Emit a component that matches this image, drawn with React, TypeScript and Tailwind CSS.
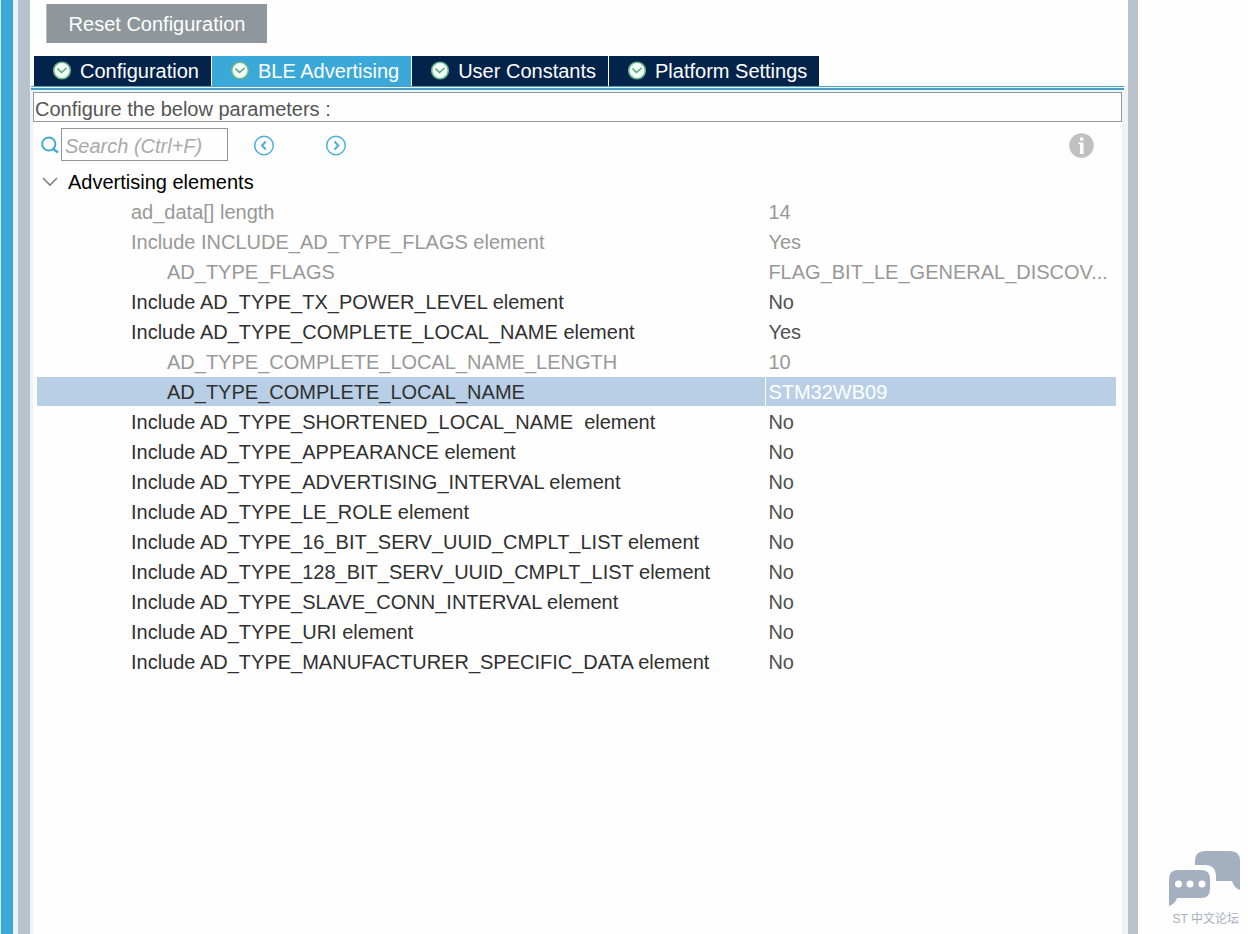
import { useState } from 'react';

const TABS = ['Configuration', 'BLE Advertising', 'User Constants', 'Platform Settings'];

type Row = { name: string; value: string; child?: boolean; disabled?: boolean };

const ROWS: Row[] = [
  { name: 'ad_data[] length', value: '14', disabled: true },
  { name: 'Include INCLUDE_AD_TYPE_FLAGS element', value: 'Yes', disabled: true },
  { name: 'AD_TYPE_FLAGS', value: 'FLAG_BIT_LE_GENERAL_DISCOV...', child: true, disabled: true },
  { name: 'Include AD_TYPE_TX_POWER_LEVEL element', value: 'No' },
  { name: 'Include AD_TYPE_COMPLETE_LOCAL_NAME element', value: 'Yes' },
  { name: 'AD_TYPE_COMPLETE_LOCAL_NAME_LENGTH', value: '10', child: true, disabled: true },
  { name: 'AD_TYPE_COMPLETE_LOCAL_NAME', value: 'STM32WB09', child: true },
  { name: 'Include AD_TYPE_SHORTENED_LOCAL_NAME  element', value: 'No' },
  { name: 'Include AD_TYPE_APPEARANCE element', value: 'No' },
  { name: 'Include AD_TYPE_ADVERTISING_INTERVAL element', value: 'No' },
  { name: 'Include AD_TYPE_LE_ROLE element', value: 'No' },
  { name: 'Include AD_TYPE_16_BIT_SERV_UUID_CMPLT_LIST element', value: 'No' },
  { name: 'Include AD_TYPE_128_BIT_SERV_UUID_CMPLT_LIST element', value: 'No' },
  { name: 'Include AD_TYPE_SLAVE_CONN_INTERVAL element', value: 'No' },
  { name: 'Include AD_TYPE_URI element', value: 'No' },
  { name: 'Include AD_TYPE_MANUFACTURER_SPECIFIC_DATA element', value: 'No' },
];

function CheckIcon() {
  return (
    <svg className="h-5 w-5 shrink-0" viewBox="0 0 20 20" fill="none">
      <circle cx="10" cy="9.5" r="8.3" fill="#f1fff6" stroke="#6db78d" strokeWidth="1.6" />
      <path d="M5.5 7.5l4 4L14.5 7" stroke="#55a377" strokeWidth="1.5" />
    </svg>
  );
}

function SearchIcon() {
  return (
    <svg className="h-[18px] w-[18px] shrink-0" viewBox="0 0 18 18" fill="none" stroke="#45abd3">
      <circle cx="7.8" cy="8" r="6.6" strokeWidth="2" />
      <path d="M11.5 12.5l5.5 4" strokeWidth="2.6" />
    </svg>
  );
}

function ArrowIcon({ d }: { d: string }) {
  return (
    <svg className="h-[22px] w-[22px]" viewBox="0 0 22 22" fill="none" stroke="#4eb0d8">
      <circle cx="11" cy="11.5" r="9.3" strokeWidth="1.5" />
      <path d={d} strokeWidth="2" />
    </svg>
  );
}

function ForumLogo() {
  return (
    <svg className="h-14 w-[71px]" viewBox="0 0 71 56">
      <path d="M36 0H61Q71 0 71 10V39Q65 37 63 30H47V26Q47 14 36 14H26V10Q26 0 36 0Z" fill="#a4b0c0" />
      <path d="M9 19H32Q41 19 41 28V38Q41 47 32 47H8Q6 53 0 55V28Q0 19 9 19Z" fill="#a4b0c0" />
      <circle cx="9.5" cy="33" r="3.5" fill="#fff" />
      <circle cx="21" cy="33" r="3.5" fill="#fff" />
      <circle cx="33" cy="33" r="3.5" fill="#fff" />
    </svg>
  );
}

export default function App() {
  const [tab, setTab] = useState('BLE Advertising');
  const [selected, setSelected] = useState('AD_TYPE_COMPLETE_LOCAL_NAME');
  const [open, setOpen] = useState(true);
  const [query, setQuery] = useState('');

  return (
    <div className="flex min-h-screen bg-[#fefefe] font-['Liberation_Sans',Arial,sans-serif] text-[20px] leading-7">
      <div className="w-px bg-[#d5edf7]" />
      <div className="w-3 bg-[#3ba8da]" />
      <div className="w-[5px] bg-[#eaf3f8]" />
      <div className="w-3 bg-[#b7c2ca]" />

      <main className="flex min-w-0 flex-1 flex-col bg-[#eff3f6]">
        <header className="bg-[#fefefe] px-1 pt-1">
          <button
            type="button"
            className="ml-3 h-[39px] w-[221px] border-l border-[#b5babd] bg-[#90979c] text-white"
          >
            Reset Configuration
          </button>
          <div role="tablist" className="mt-[13px] flex gap-px">
            {TABS.map((t) => (
              <button
                key={t}
                type="button"
                role="tab"
                aria-selected={t === tab}
                onClick={() => setTab(t)}
                className={`flex h-[30px] items-center gap-2 pr-3 pl-[18px] text-white ${
                  t === tab ? 'bg-[#3ba8da]' : 'bg-[#03234b]'
                }`}
              >
                <CheckIcon />
                {t}
              </button>
            ))}
          </div>
        </header>
        <div className="mr-1 ml-px h-1 border-t border-b-2 border-[#4b9fc3] bg-[#e4f7fd]" />

        <section className="mt-[2px] mr-[6px] ml-[3px] flex-1 bg-[#fefefe]">
          <p className="border border-[#90979c] px-px pt-1 leading-6 text-[#555555]">
            Configure the below parameters :
          </p>

          <div className="flex items-center pt-[6px] pr-7 pl-2">
            <label htmlFor="search" aria-label="Search">
              <SearchIcon />
            </label>
            <input
              id="search"
              value={query}
              onChange={(e) => setQuery(e.target.value)}
              placeholder="Search (Ctrl+F)"
              className="ml-[2px] h-[33px] w-[167px] border border-[#90979c] px-[3px] pt-[3px] outline-none placeholder:text-[#aaaaaa] placeholder:italic"
            />
            <button type="button" aria-label="Previous match" className="ml-[25px]">
              <ArrowIcon d="M12.8 7.5L9 11.5l3.8 4" />
            </button>
            <button type="button" aria-label="Next match" className="ml-[50px]">
              <ArrowIcon d="M9.5 7.5l3.8 4-3.8 4" />
            </button>
            <button type="button" aria-label="Information" className="ml-auto">
              <svg className="h-[26px] w-[25px]" viewBox="0 0 25 26">
                <circle cx="12.5" cy="13.5" r="12.3" fill="#c0c0c0" />
                <path d="M11 5.5h3.5v3H11zM9.5 10.5h5V22H11V12H9.5z" fill="#fff" />
              </svg>
            </button>
          </div>

          <div className="pt-[6px] pr-[6px] pl-1">
            <button
              type="button"
              aria-expanded={open}
              onClick={() => setOpen(!open)}
              className="flex h-[30px] items-center gap-[10px] pl-[5px] text-black"
            >
              <svg className="h-4 w-4" viewBox="0 0 16 16" fill="none" stroke="#808080" strokeWidth="1.6">
                <path d="M1 4l7 7 7-7" />
              </svg>
              Advertising elements
            </button>

            {open && (
              <table className="w-full table-fixed border-separate border-spacing-0">
                <colgroup>
                  <col className="w-[67.6%]" />
                  <col />
                </colgroup>
                <tbody>
                  {ROWS.map((row) => {
                    const active = row.name === selected;
                    return (
                      <tr
                        key={row.name}
                        onClick={() => setSelected(row.name)}
                        className={active ? 'bg-[#b8cfe5]' : ''}
                      >
                        <td
                          className={`border-r border-b border-[#fefefe] pt-px whitespace-pre ${row.child ? 'pl-[130px]' : 'pl-[94px]'} ${
                            row.disabled ? 'text-[#989898]' : 'text-[#303030]'
                          }`}
                        >
                          {row.name}
                        </td>
                        <td
                          className={`truncate border-b border-[#fefefe] pt-px pl-[2px] ${
                            active ? 'text-white' : row.disabled ? 'text-[#989898]' : 'text-[#505050]'
                          }`}
                        >
                          {row.value}
                        </td>
                      </tr>
                    );
                  })}
                </tbody>
              </table>
            )}
          </div>
        </section>
      </main>

      <div className="w-[10px] bg-[#b7c2ca]" />
      <aside className="flex w-[110px] flex-col items-end justify-end gap-[2px] pr-2 pb-[5px]">
        <ForumLogo />
        <p className="pr-px text-[12px] leading-5 text-[#a4b0c0] font-['Liberation_Sans','Noto_Sans_CJK_SC',sans-serif]">
          ST 中文论坛
        </p>
      </aside>
    </div>
  );
}
